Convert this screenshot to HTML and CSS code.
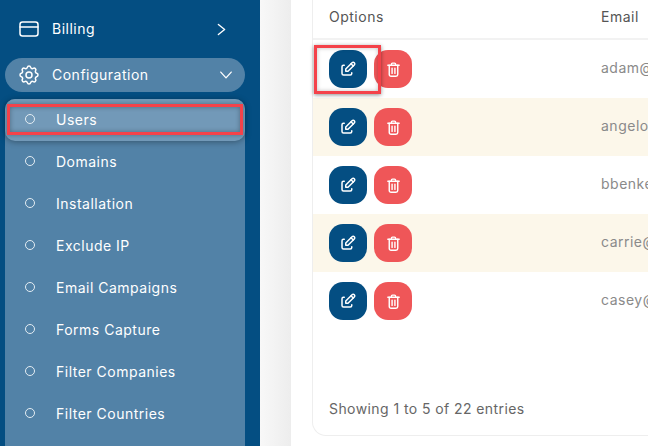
FILE: index.html
```html
<!DOCTYPE html>
<html lang="en">
<head>
<meta charset="utf-8">
<title>Users</title>
<link rel="stylesheet" href="styles.css">
</head>
<body>
<svg class="sprites" aria-hidden="true">
  <symbol id="edit" viewBox="0 0 24 24"><path d="M7 7H6a2 2 0 0 0-2 2v9a2 2 0 0 0 2 2h9a2 2 0 0 0 2-2v-1"/><path d="M20.385 6.585a2.1 2.1 0 0 0-2.97-2.97L9 12v3h3l8.385-8.415"/><path d="M16 5l3 3"/></symbol>
  <symbol id="trash" viewBox="0 0 24 24"><path d="M4 6h16"/><path d="M9 6V4.500a1.500 1.500 0 0 1 1.500-1.500h3a1.500 1.500 0 0 1 1.500 1.500V6"/><path d="M6 6v13a2.500 2.500 0 0 0 2.500 2.500h7a2.500 2.500 0 0 0 2.500-2.500V6"/><path d="M10 10v7.500M14 10v7.500"/></symbol>
</svg>
<div class="app">
  <aside class="sidebar">
    <div class="nav-row">
      <svg class="nav-icon" viewBox="0 0 24 24"><rect x="3" y="5" width="18" height="14" rx="2.500"/><path d="M3 10h18"/></svg>
      <span class="nav-label">Billing</span>
      <svg class="chev" viewBox="0 0 24 24"><path d="M7 4l10 8-10 8"/></svg>
    </div>
    <div class="nav-row nav-open">
      <svg class="nav-icon" viewBox="0 0 24 24"><path d="M10.325 4.317c.426-1.756 2.924-1.756 3.35 0a1.724 1.724 0 0 0 2.573 1.066c1.543-.94 3.31.826 2.37 2.37a1.724 1.724 0 0 0 1.065 2.572c1.756.426 1.756 2.924 0 3.35a1.724 1.724 0 0 0-1.066 2.573c.94 1.543-.826 3.31-2.37 2.37a1.724 1.724 0 0 0-2.572 1.065c-.426 1.756-2.924 1.756-3.35 0a1.724 1.724 0 0 0-2.573-1.066c-1.543.94-3.31-.826-2.37-2.37a1.724 1.724 0 0 0-1.065-2.572c-1.756-.426-1.756-2.924 0-3.35a1.724 1.724 0 0 0 1.066-2.573c-.94-1.543.826-3.31 2.37-2.37 1 .608 2.296.07 2.572-1.065z"/><circle cx="12" cy="12" r="3"/></svg>
      <span class="nav-label">Configuration</span>
      <svg class="chev-down" viewBox="0 0 24 24"><path d="M3 7l9 10 9-10"/></svg>
    </div>
    <ul class="submenu">
      <li class="sub-item sub-active"><span class="dot"></span>Users<span class="mark mark-user"></span></li>
      <li class="sub-item"><span class="dot"></span>Domains</li>
      <li class="sub-item"><span class="dot"></span>Installation</li>
      <li class="sub-item"><span class="dot"></span>Exclude IP</li>
      <li class="sub-item"><span class="dot"></span>Email Campaigns</li>
      <li class="sub-item"><span class="dot"></span>Forms Capture</li>
      <li class="sub-item"><span class="dot"></span>Filter Companies</li>
      <li class="sub-item"><span class="dot"></span>Filter Countries</li>
    </ul>
  </aside>
  <div class="gutter"></div>
  <main class="content">
    <section class="card">
      <div class="row row-head"><div class="col-options">Options</div><div class="col-email">Email</div></div>
      <div class="row">
        <div class="col-options">
          <button class="btn btn-edit"><svg class="icon-edit"><use href="#edit"/></svg></button>
          <button class="btn btn-del"><svg class="icon-trash"><use href="#trash"/></svg></button>
          <span class="mark mark-edit"></span>
        </div>
        <div class="col-email">adam@</div>
      </div>
      <div class="row row-alt">
        <div class="col-options">
          <button class="btn btn-edit"><svg class="icon-edit"><use href="#edit"/></svg></button>
          <button class="btn btn-del"><svg class="icon-trash"><use href="#trash"/></svg></button>
        </div>
        <div class="col-email">angelo</div>
      </div>
      <div class="row">
        <div class="col-options">
          <button class="btn btn-edit"><svg class="icon-edit"><use href="#edit"/></svg></button>
          <button class="btn btn-del"><svg class="icon-trash"><use href="#trash"/></svg></button>
        </div>
        <div class="col-email">bbenke</div>
      </div>
      <div class="row row-alt">
        <div class="col-options">
          <button class="btn btn-edit"><svg class="icon-edit"><use href="#edit"/></svg></button>
          <button class="btn btn-del"><svg class="icon-trash"><use href="#trash"/></svg></button>
        </div>
        <div class="col-email">carrie@</div>
      </div>
      <div class="row">
        <div class="col-options">
          <button class="btn btn-edit"><svg class="icon-edit"><use href="#edit"/></svg></button>
          <button class="btn btn-del"><svg class="icon-trash"><use href="#trash"/></svg></button>
        </div>
        <div class="col-email">casey@</div>
      </div>
      <p class="entries">Showing 1 to 5 of 22 entries</p>
    </section>
  </main>
</div>
</body>
</html>
```
FILE: styles.css
```css
* { box-sizing: border-box; }
html, body { margin: 0; height: 100%; overflow: hidden; }
body {
  font-family: "Inter", "Open Sans", sans-serif;
  font-size: 14px;
  letter-spacing: 0.5px;
  background: #fff;
}
.sprites { display: none; }
.app { display: flex; width: 648px; height: 446px; overflow: hidden; }

.sidebar {
  display: flex;
  flex-direction: column;
  flex: 0 0 260px;
  background: #044e82;
  padding: 10px 15px 0 5px;
  color: #fff;
}
.nav-row {
  display: flex;
  flex: none;
  align-items: center;
  height: 38px;
  padding: 0 12px 0 12px;
  border-radius: 17px;
}
.nav-open { height: 34px; margin-top: 10px; background: #5282a7; }
.nav-icon {
  flex: none;
  width: 24px;
  height: 24px;
  fill: none;
  stroke: #fff;
  stroke-width: 1.5;
  stroke-linejoin: round;
  stroke-linecap: round;
}
.nav-label { flex: 1; margin: 0 0 2px 11px; }
.chev {
  width: 15px;
  height: 15px;
  margin-right: 4px;
  fill: none;
  stroke: #fff;
  stroke-width: 2.2;
  stroke-linecap: round;
  stroke-linejoin: round;
}
.chev-down {
  width: 14px;
  height: 14px;
  fill: none;
  stroke: #fff;
  stroke-width: 2.2;
  stroke-linecap: round;
  stroke-linejoin: round;
}

.submenu {
  flex: 1;
  list-style: none;
  margin: 7px 0 0;
  padding: 0;
  background: #5282a7;
  border-radius: 10px 10px 0 0;
}
.sub-item {
  position: relative;
  display: flex;
  align-items: center;
  height: 42px;
  padding: 0 0 2px 20px;
}
.sub-active {
  background: #7299b8;
  border-radius: 10px;
  box-shadow: 0 1px 6px rgba(0, 0, 0, 0.35);
}
.dot {
  width: 10px;
  height: 10px;
  border: 1.2px solid #e4edf3;
  border-radius: 50%;
  margin-right: 21px;
}
.mark { position: absolute; border: 3px solid #f4424a; pointer-events: none; }
.mark-user { left: 2px; right: 2px; top: 5px; bottom: 6px; box-shadow: 0 0 4px rgba(0, 0, 0, 0.3), inset 0 0 5px rgba(0, 0, 0, 0.3); }

.gutter {
  flex: 0 0 31px;
  background: linear-gradient(to right, #f8f8f8, #ededed);
}
.content { flex: 1; min-width: 0; padding: 0 0 10px 21px; background: #fff; }
.card {
  display: flex;
  flex-direction: column;
  width: 500px;
  height: 100%;
  border: 1px solid #eeeeee;
  border-top: none;
  border-radius: 0 0 0 14px;
}
.row { display: flex; align-items: center; height: 58px; }
.row-alt { background: #fcf7ea; }
.row-head { height: 40px; padding-bottom: 5px; border-bottom: 2px solid #f2f2f2; color: #555; }
.col-options {
  position: relative;
  display: flex;
  align-items: center;
  gap: 7px;
  flex: 0 0 288px;
  padding-left: 16px;
}
.col-email { margin-bottom: 3px; color: #8a8a8a; }
.row-head .col-email { margin-bottom: 0; color: #555; }
.btn {
  display: flex;
  align-items: center;
  justify-content: center;
  width: 38px;
  height: 38px;
  padding: 0;
  border: none;
  border-radius: 14px;
}
.btn-edit { background: #044e82; }
.btn-del { background: #ef5658; }
.icon-edit, .icon-trash { fill: none; stroke: #fff; stroke-width: 2; stroke-linecap: round; stroke-linejoin: round; }
.icon-edit { width: 18px; height: 18px; }
.icon-trash { width: 17px; height: 17px; }
.mark-edit {
  left: 1px;
  top: -5px;
  width: 67px;
  height: 49px;
  box-shadow: 0 1px 4px rgba(0, 0, 0, 0.45), inset 0 0 4px rgba(0, 0, 0, 0.25);
}
.entries { margin: auto 0 18px 16px; color: #666; letter-spacing: 0.42px; }
```
